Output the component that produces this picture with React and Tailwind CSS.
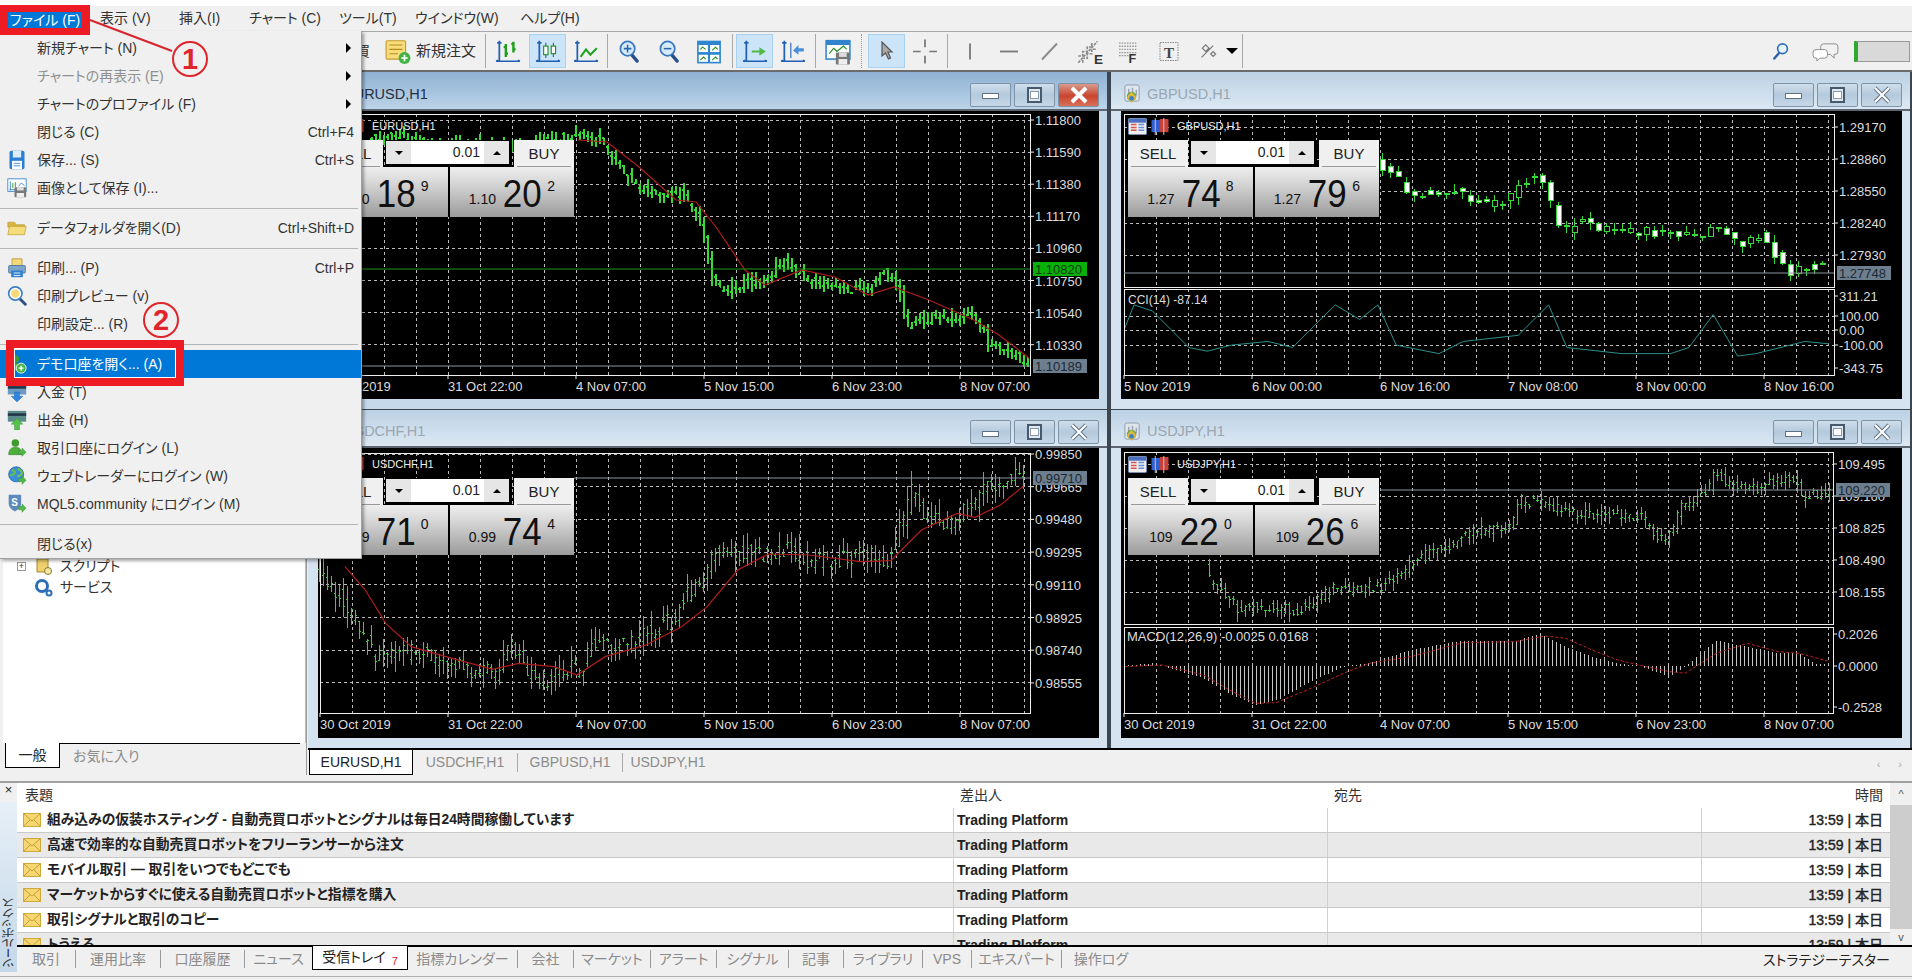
import React from 'react'

const font = "[font-family:'Liberation_Sans','Noto_Sans_CJK_JP',sans-serif] [font-feature-settings:'palt']"
const GREEN = '#36d936'

// ---------- chart helpers ----------
const scale = pts => pts.map(([x, y]) => [x * 1.2194, y * 1.2194])
const zoomed = (pts, ox, oy, fx) => pts.map(([x, y]) => [ox + x / fx, oy + y / 3])
const line = pts => pts.map(p => p.join(',')).join(' ')

function lerp(pts, x) {
  if (x <= pts[0][0]) return pts[0][1]
  for (let i = 1; i < pts.length; i++) {
    if (x <= pts[i][0]) {
      const [a, b] = [pts[i - 1], pts[i]]
      return a[1] + ((b[1] - a[1]) * (x - a[0])) / (b[0] - a[0] || 1)
    }
  }
  return pts[pts.length - 1][1]
}

function makeBars(pts, step, seed, amp) {
  let s = seed
  const r = () => (s = (s * 9301 + 49297) % 233280) / 233280
  const out = []
  for (let x = Math.round(pts[0][0]) + 0.5; x <= pts[pts.length - 1][0]; x += step) {
    const o = lerp(pts, x - step / 2) + (r() - 0.5) * amp
    const c = lerp(pts, x + step / 2) + (r() - 0.5) * amp
    out.push({ x, o, c, hi: Math.min(o, c) - r() * amp * 0.9, lo: Math.max(o, c) + r() * amp * 0.9 })
  }
  return out
}

const barPath = bars => bars.map(b => `M${b.x} ${b.hi.toFixed(1)}V${b.lo.toFixed(1)}M${b.x - 1.5} ${b.o.toFixed(1)}H${b.x}M${b.x} ${b.c.toFixed(1)}H${b.x + 1.5}`).join('')

function Candles({ bars, w = 3 }) {
  return (
    <g shapeRendering="crispEdges">
      {bars.map(b => (
        <g key={b.x} stroke={GREEN}>
          <line x1={b.x} x2={b.x} y1={b.hi} y2={b.lo} />
          <rect x={b.x - w / 2} width={w} y={Math.min(b.o, b.c)} height={Math.max(1, Math.abs(b.o - b.c))} fill={b.o < b.c ? '#fff' : '#000'} />
        </g>
      ))}
    </g>
  )
}

function Chart({ x, y, w, h, left, right, panes, levels, times, timeY, tags = [], children }) {
  const bottom = panes[panes.length - 1][1]
  const vx = []
  for (let v = left + 32; v < right; v += 32) vx.push(v)
  return (
    <svg className="block" width={w} height={h} viewBox={`${x} ${y} ${w} ${h}`} fontFamily="Liberation Sans, sans-serif" fontSize="13">
      <g shapeRendering="crispEdges">
        {panes.map(([a, b]) => (
          <g key={a}>
            {vx.map(v => <line key={v} x1={v} x2={v} y1={a} y2={b} stroke="#bbb" strokeDasharray="3 3" />)}
          </g>
        ))}
        {levels.filter(l => l.grid !== false).map(l => (
          <line key={l.t} x1={left} x2={right} y1={l.y} y2={l.y} stroke="#bbb" strokeDasharray="3 3" />
        ))}
      </g>
      {children}
      {panes.map(([a, b]) => <rect key={a} x={left} y={a} width={right - left} height={b - a} fill="none" stroke="#eee" shapeRendering="crispEdges" />)}
      {levels.map(l => (
        <g key={l.t}>
          <line x1={right} x2={right + 4} y1={l.y} y2={l.y} stroke="#eee" />
          <text x={right + 5} y={l.y + 5} fill="#ddd">{l.t}</text>
        </g>
      ))}
      {tags.map(t => (
        <g key={t.t}>
          <line x1={t.from ?? left} x2={right} y1={t.y} y2={t.y} stroke={t.line} />
          <rect x={right + 3} y={t.y - 7} width="54" height="14" fill={t.bg} />
          <text x={right + 5} y={t.y + 5} fill={t.fg}>{t.t}</text>
        </g>
      ))}
      {times.map((t, i) => (
        <g key={t}>
          <line x1={left + i * 128} x2={left + i * 128} y1={bottom} y2={bottom + 4} stroke="#eee" />
          <text x={left + i * 128} y={timeY} fill="#ddd">{t}</text>
        </g>
      ))}
    </svg>
  )
}

// ---------- chart data ----------
const times = ['30 Oct 2019', '31 Oct 22:00', '4 Nov 07:00', '5 Nov 15:00', '6 Nov 23:00', '8 Nov 07:00']

const eurPts = [[372, 138], [400, 136], [440, 146], [520, 146], [560, 138], [585, 136], [600, 140], [622, 165], [640, 187], [660, 197], [681, 193], [693, 203], [705, 233], [713, 273], [722, 290], [762, 280], [787, 263], [811, 280], [844, 290], [873, 287], [885, 270], [897, 283], [905, 300], [908, 329], [920, 320], [975, 315], [994, 347], [1029, 362]]
const eurMa = [[579, 140], [608, 142], [640, 167], [677, 200], [697, 202], [717, 227], [746, 270], [766, 285], [803, 270], [836, 277], [869, 295], [895, 287], [930, 300], [975, 320], [1000, 335], [1030, 358]]

const gbpPts = [[1382, 163], [1396, 173], [1405, 182], [1413, 193], [1435, 191], [1460, 193], [1476, 199], [1492, 203], [1509, 200], [1517, 195], [1524, 182], [1540, 178], [1549, 187], [1556, 208], [1565, 232], [1572, 227], [1588, 222], [1596, 227], [1619, 230], [1668, 233], [1684, 233], [1700, 238], [1717, 228], [1733, 238], [1747, 245], [1764, 236], [1772, 242], [1780, 257], [1788, 268], [1796, 273], [1805, 267], [1825, 268]]
const cci = scale([[922, 270], [930, 250], [945, 255], [960, 270], [975, 285], [990, 288], [1010, 283], [1040, 280], [1060, 285], [1075, 270], [1095, 250], [1115, 262], [1130, 250], [1145, 283], [1180, 290], [1200, 280], [1245, 275], [1270, 250], [1285, 285], [1330, 290], [1370, 290], [1385, 285], [1405, 258], [1425, 292], [1440, 290], [1480, 280], [1500, 282]])

const chfPts = zoomed([[40, 470], [60, 510], [100, 600], [140, 700], [160, 745], [200, 720], [260, 740], [320, 770], [390, 790], [420, 700], [450, 780], [490, 820], [530, 770], [560, 780], [580, 690], [620, 710], [650, 700], [700, 660], [740, 620], [760, 560], [800, 490], [820, 420], [880, 430], [920, 430], [960, 420], [1000, 450], [1060, 450], [1120, 430], [1155, 460], [1190, 320], [1205, 240], [1230, 330], [1280, 340], [1320, 290], [1350, 240], [1400, 190], [1425, 190]], 300, 410, 1.96)
const chfMa = zoomed([[90, 470], [130, 540], [170, 640], [220, 710], [300, 745], [380, 778], [430, 760], [500, 770], [545, 795], [600, 740], [680, 705], [750, 650], [800, 590], [860, 480], [920, 432], [1000, 435], [1100, 455], [1160, 452], [1220, 360], [1290, 310], [1325, 322], [1375, 285], [1420, 228]], 300, 410, 1.96)

const jpyPts = zoomed([[210, 500], [215, 540], [240, 580], [270, 625], [330, 620], [380, 630], [415, 620], [430, 590], [460, 560], [480, 570], [550, 555], [600, 500], [650, 445], [680, 440], [720, 395], [800, 375], [815, 300], [880, 320], [920, 340], [1000, 345], [1050, 350], [1090, 425], [1110, 400], [1120, 330], [1180, 270], [1190, 210], [1215, 250], [1260, 270], [1340, 225], [1360, 295], [1410, 275]], 1100, 400, 1.931)
const macdHist = zoomed([[48, 797], [100, 790], [120, 797], [200, 835], [250, 880], [300, 915], [350, 895], [400, 850], [470, 800], [520, 790], [600, 750], [700, 722], [800, 725], [850, 700], [900, 740], [950, 770], [1000, 790], [1040, 797], [1100, 830], [1130, 800], [1190, 722], [1250, 740], [1310, 760], [1350, 760], [1380, 790], [1410, 795]], 1100, 400, 1.931)
const macdSig = zoomed([[48, 800], [120, 795], [200, 825], [250, 870], [300, 910], [340, 908], [400, 870], [470, 820], [520, 790], [600, 770], [700, 728], [800, 725], [860, 708], [900, 715], [950, 750], [1000, 780], [1040, 795], [1100, 815], [1130, 820], [1190, 760], [1250, 730], [1310, 755], [1350, 760], [1410, 785]], 1100, 400, 1.931)

const histBars = []
for (let x = 1128.5; x < 1830; x += 4) histBars.push(x)

const lv = (start, step, arr) => arr.map((t, i) => ({ t, y: start + i * step }))

// ---------- toolbar & menu icons ----------
const Svg = ({ className = 'w-[20px] h-[20px]', children, box = '0 0 24 24' }) => (
  <svg viewBox={box} className={`${className} shrink-0`} fill="none">{children}</svg>
)

const axes = <path d="M4 2v19M1 21h22M2 4h4M1 21l2-1M23 21l-2-1" stroke="#1f5fb4" strokeWidth="1.6" />

const tb = {
  order: (
    <Svg className="w-[26px] h-[27px]">
      <rect x="1" y="2" width="18" height="17" rx="1" fill="#f6dc7a" stroke="#c59a28" />
      <path d="M4 6h12M4 10h12M4 14h8" stroke="#b98a1c" />
      <circle cx="18" cy="18" r="5.5" fill="#45b245" />
      <path d="M18 15v6M15 18h6" stroke="#fff" strokeWidth="1.6" />
    </Svg>
  ),
  bars: <Svg className="w-[26px] h-[27px]">{axes}<path d="M10 5v12M8 8h2M10 14h2M17 3v10M15 5h2M17 10h2" stroke="#1ba01b" strokeWidth="2.2" /></Svg>,
  candles: <Svg className="w-[26px] h-[27px]">{axes}<path d="M10 4v14M17 4v13" stroke="#1f5fb4" /><rect x="8" y="7" width="4" height="8" fill="#fff" stroke="#1a8a1a" /><rect x="15" y="7" width="4" height="7" fill="#fff" stroke="#1a8a1a" /></Svg>,
  line: <Svg className="w-[26px] h-[27px]">{axes}<path d="M7 17l5-7 4 5 6-6" stroke="#1ba01b" strokeWidth="1.8" /></Svg>,
  zoomIn: <Svg className="w-[23px] h-[27px]"><path d="M14 15l6 7" stroke="#274f8a" strokeWidth="3.5" strokeLinecap="round" /><circle cx="10" cy="9" r="7.5" fill="#d6ebfa" stroke="#3a78c0" strokeWidth="1.8" /><path d="M10 5v8M6 9h8" stroke="#2a64aa" strokeWidth="1.6" /></Svg>,
  zoomOut: <Svg className="w-[23px] h-[27px]"><path d="M14 15l6 7" stroke="#274f8a" strokeWidth="3.5" strokeLinecap="round" /><circle cx="10" cy="9" r="7.5" fill="#d6ebfa" stroke="#3a78c0" strokeWidth="1.8" /><path d="M6 9h8" stroke="#2a64aa" strokeWidth="1.6" /></Svg>,
  tile: (
    <Svg className="w-[26px] h-[27px]">
      <rect x="1" y="2" width="22" height="21" fill="#2f86d0" />
      <rect x="2.5" y="6" width="8.5" height="6.5" fill="#fff" /><rect x="13" y="6" width="8.5" height="6.5" fill="#fff" />
      <rect x="2.5" y="15" width="8.5" height="6.5" fill="#fff" /><rect x="13" y="15" width="8.5" height="6.5" fill="#fff" />
      <path d="M4 10l2-2 3 2M15 11l3-3 2 2M4 20l3-3 2 2M15 20l3-3 2 2" stroke="#1a8a1a" />
    </Svg>
  ),
  auto: <Svg className="w-[26px] h-[27px]">{axes}<path d="M9 11h7V8l6 4-6 4v-3H9z" fill="#52b848" /></Svg>,
  shift: <Svg className="w-[26px] h-[27px]">{axes}<path d="M10 4v14" stroke="#1f5fb4" /><path d="M22 9h-5V6l-5 5 5 4v-3h5z" fill="#4a90d9" /></Svg>,
  save: (
    <Svg className="w-[26px] h-[27px]">
      <rect x="1" y="2" width="22" height="17" fill="#fff" stroke="#3083cc" strokeWidth="1.4" />
      <rect x="1" y="2" width="22" height="4" fill="#3083cc" />
      <path d="M4 14l4-5 3 3 6-5 3 3" stroke="#1a8a1a" />
      <rect x="10" y="13" width="13" height="11" rx="1" fill="#777" />
      <rect x="13" y="13" width="7" height="4" fill="#ddd" /><rect x="12.5" y="19" width="8" height="5" fill="#eee" />
    </Svg>
  ),
  cursor: <Svg className="w-[14px] h-[20px]" box="0 0 14 20"><path d="M2 1v14l3.5-3 3 6 2-1-2.5-6H12z" fill="#a9a9a9" stroke="#555" strokeWidth="1.2" /></Svg>,
  cross: <Svg className="w-[26px] h-[27px]"><path d="M12 1v7M12 16v7M1 12h7M16 12h7" stroke="#777" strokeWidth="1.6" /></Svg>,
  vline: <Svg className="w-[18px] h-[27px]" box="0 0 18 24"><path d="M9 4v16" stroke="#777" strokeWidth="1.8" /></Svg>,
  hline: <Svg className="w-[18px] h-[27px]" box="0 0 18 24"><path d="M0 12h18" stroke="#777" strokeWidth="1.8" /></Svg>,
  trend: <Svg className="w-[17px] h-[27px]" box="0 0 17 24"><path d="M1 20L16 4" stroke="#8a8a8a" strokeWidth="2" /></Svg>,
  fibE: (
    <Svg className="w-[27px] h-[27px]">
      <path d="M2 22L19 3M2 16h4v-4h4V8h4V4M6 22v-4h4v-4h4v-4h4" stroke="#8a8a8a" strokeWidth="1.5" strokeDasharray="2.5 1" />
      <text x="16" y="23" fontSize="12" fontWeight="700" fontFamily="Liberation Sans" fill="#333">E</text>
    </Svg>
  ),
  fibF: (
    <Svg className="w-[21px] h-[27px]" box="0 0 20 24">
      <path d="M1 4h17M1 7h17M1 10h17M1 13h17M1 16h10" stroke="#999" strokeWidth="1.2" strokeDasharray="1.5 1" />
      <text x="10" y="23" fontSize="12" fontWeight="700" fontFamily="Liberation Sans" fill="#333">F</text>
    </Svg>
  ),
  text: (
    <Svg className="w-[20px] h-[27px]" box="0 0 20 24">
      <rect x="1" y="3" width="18" height="18" stroke="#888" strokeDasharray="1.5 1" />
      <text x="5" y="18" fontSize="15" fontWeight="700" fontFamily="Liberation Serif" fill="#444">T</text>
    </Svg>
  ),
  shape: <Svg className="w-[20px] h-[27px]"><path d="M4 8l4-4 4 4-4 4zM14 15l3-3 3 3-3 3zM3 19L17 5" stroke="#777" strokeWidth="1.4" /></Svg>,
  search: <Svg className="w-[18px] h-[20px]"><path d="M10 14l-7 8" stroke="#2a5fa8" strokeWidth="3.2" strokeLinecap="round" /><circle cx="14" cy="9" r="6.5" fill="#e6f2fc" stroke="#2f6fba" strokeWidth="2.2" /></Svg>,
  chat: (
    <Svg className="w-[27px] h-[21px]" box="0 0 28 22">
      <path d="M12 3h12a3 3 0 013 3v5a3 3 0 01-3 3h-1v4l-4-4h-7a3 3 0 01-3-3V6a3 3 0 013-3z" fill="#f2f2f2" stroke="#8a8a8a" />
      <path d="M4 9h9a3 3 0 013 3v3a3 3 0 01-3 3H8l-3 3v-3H4a3 3 0 01-3-3v-3a3 3 0 013-3z" fill="#fff" stroke="#8a8a8a" />
    </Svg>
  ),
}

const greenArrow = <path d="M14 15h4v-3l5 5-5 5v-3h-4z" fill="#52b848" stroke="#2f8a2f" strokeWidth=".5" />
const person = <><circle cx="10" cy="6" r="4.5" fill="#3f9b2f" /><path d="M2 20c0-6 3-9 8-9s8 3 8 9z" fill="#4caf3a" stroke="#2f7a25" strokeWidth=".6" /></>

const mi = {
  save: <Svg><rect x="3" y="1" width="18" height="22" rx="2" fill="#2a7fd4" /><rect x="7" y="1" width="10" height="8" fill="#dcecf9" /><rect x="6" y="13" width="12" height="10" fill="#fff" /><path d="M8 16h8M8 19h8" stroke="#2a7fd4" /></Svg>,
  saveImg: <Svg><rect x="1" y="1" width="22" height="15" fill="#fff" stroke="#2f7fc8" /><path d="M4 4v11M3 14h8M14 10l3-4 4 3" stroke="#2f7fc8" /><path d="M7 6v6M10 5v6" stroke="#1a8a1a" /><rect x="9" y="11" width="14" height="12" rx="1" fill="#777" /><rect x="12" y="11" width="8" height="4" fill="#ddd" /><rect x="11.5" y="18" width="9" height="5" fill="#eee" /></Svg>,
  folder: <Svg><path d="M1 5h8l2 3h10v3H1z" fill="#d9b441" stroke="#b08c24" strokeWidth=".6" /><path d="M1 20L3 10h20l-2 10z" fill="#f5dc7a" stroke="#c09a2c" strokeWidth=".8" /></Svg>,
  print: <Svg><path d="M6 1h12v8H6z" fill="#f4d97b" stroke="#b9982f" /><rect x="2" y="9" width="20" height="9" rx="1" fill="#7ea6c9" stroke="#4a7299" /><rect x="5" y="15" width="14" height="8" fill="#2e7fcf" /><path d="M8 18h8M8 21h8" stroke="#fff" /></Svg>,
  preview: <Svg><path d="M15 15l7 7" stroke="#2c4f86" strokeWidth="3.4" strokeLinecap="round" /><circle cx="10" cy="9" r="8" fill="#fff" stroke="#3f7fc4" strokeWidth="2" /><circle cx="10" cy="9" r="5" fill="#f4d97b" /></Svg>,
  demo: <Svg>{person}<circle cx="17" cy="17" r="6" fill="#4bb74b" stroke="#fff" /><path d="M17 14v6M14 17h6" stroke="#fff" strokeWidth="1.6" /></Svg>,
  deposit: <Svg><rect x="1" y="2" width="22" height="13" fill="#6c9ac4" /><rect x="1" y="5" width="22" height="3" fill="#234" /><path d="M9 12h6v5h4l-7 7-7-7h4z" fill="#2e86de" stroke="#1a5fa8" strokeWidth=".5" /></Svg>,
  withdraw: <Svg><rect x="1" y="1" width="22" height="13" fill="#5b8a8a" /><rect x="1" y="4" width="22" height="3" fill="#234" /><path d="M9 24v-7H5l7-7 7 7h-4v7z" fill="#55c24b" stroke="#2f8a2f" strokeWidth=".5" /></Svg>,
  login: <Svg>{person}{greenArrow}</Svg>,
  web: <Svg><circle cx="11" cy="10" r="9" fill="#3b8fd8" stroke="#1f6ab0" /><path d="M6 5c3 0 4 2 3 4s-4 1-5 3M13 3c2 2 6 3 5 6s-4 1-5 4" stroke="#6cc24a" strokeWidth="2.4" />{greenArrow}</Svg>,
  mql: <Svg><path d="M2 1h15v10c0 5-4 8-7.500 10C6 19 2 16 2 11z" fill="#5c88bd" /><text x="5" y="14" fontSize="12" fontWeight="700" fontFamily="Liberation Sans" fill="#fff">S</text>{greenArrow}</Svg>,
}

const AppIcon = () => (
  <svg viewBox="0 0 20 22" className="w-[19px] h-[21px] shrink-0">
    <rect x="2" y="1" width="15" height="17" rx="2" fill="#dfe6ee" stroke="#8f9aa8" />
    <path d="M6 5v9M10 4v10M14 6v6" stroke="#9aa5b3" strokeWidth="1.5" />
    <circle cx="9" cy="13" r="5" fill="#6aa84f" />
    <path d="M9 8l5 6-5 6-5-6z" fill="#e0b93a" />
    <circle cx="9" cy="15" r="2.500" fill="#3d7fc4" />
  </svg>
)

// ---------- windows ----------
function TitleBtn({ kind, active }) {
  const red = kind === 'x' && active
  return (
    <div className={`w-[41px] h-[24px] rounded-[2px] border border-[#7d93a8] flex items-center justify-center ${red ? 'bg-[linear-gradient(#d99a8c,#c9452f_55%,#d9705a)]' : 'bg-[linear-gradient(#cfdeec,#b4c9dc_50%,#c6d8e8)]'}`}>
      {kind === 'min' && <div className="w-[17px] h-[6px] mt-[3px] bg-white border border-[#5f7184]" />}
      {kind === 'max' && <div className="w-[15px] h-[16px] border-2 border-[#46596d] bg-[#dfe8f0] flex items-center justify-center"><div className="w-[9px] h-[8px] bg-white border border-[#8a99a8]" /></div>}
      {kind === 'x' && (
        <svg viewBox="0 0 18 18" className="w-[18px] h-[18px]"><path d="M2 2l14 14M16 2L2 16" stroke={red ? '#fff' : '#5f7184'} strokeWidth="4" /><path d="M2 2l14 14M16 2L2 16" stroke="#fff" strokeWidth="2.2" /></svg>
      )}
    </div>
  )
}

function ChartWindow({ title, active, bodyH, titleH, children, edge }) {
  return (
    <div className={`pl-[10px] pr-[8px] flex flex-col ${active ? 'bg-[#c4d8ea]' : 'bg-[#d5e3f0]'} ${edge}`}>
      <div className={`-ml-[10px] -mr-[8px] pl-[12px] pr-[8px] pt-[8px] flex items-center shrink-0 border-b-2 border-[#5d6670] ${titleH} ${active ? 'bg-[linear-gradient(#8fb2d4,#bcd3e8)]' : 'bg-[linear-gradient(#bcd1e4,#dce8f3)]'}`}>
        <AppIcon />
        <span className={`ml-[5px] text-[14.5px] ${active ? 'text-[#24313d]' : 'text-[#9aa6b1]'}`}>{title}</span>
        <div className="ml-auto flex gap-[3px]">
          <TitleBtn kind="min" active={active} />
          <TitleBtn kind="max" active={active} />
          <TitleBtn kind="x" active={active} />
        </div>
      </div>
      <div className="relative bg-black" style={{ height: bodyH }}>{children}</div>
    </div>
  )
}

function Price({ pre, big, sup, className }) {
  return (
    <div className={`h-[50px] bg-[linear-gradient(#eeeeee,#d8d8d8_30%,#9b9b9b)] flex items-end justify-center text-[#111] ${className}`}>
      <span className="text-[14px] leading-none mb-[11px] mr-[5px]">{pre}</span>
      <span className="text-[38px] leading-none mb-[4px] scale-x-[.92]">{big}</span>
      <span className="text-[14px] leading-none mb-[24px] ml-[4px]">{sup}</span>
    </div>
  )
}

function TradePanel({ pos, name, sell, buy }) {
  return (
    <div className={`absolute w-[251px] ${pos}`}>
      <div className="absolute -top-[22px] left-0 h-[17px] flex items-center">
        <svg viewBox="0 0 20 18" className="w-[19px] h-[17px]"><rect x=".5" y=".5" width="19" height="17" rx="1" fill="#eee" stroke="#7a8fb8" /><rect x="1" y="1" width="18" height="4" fill="#4c6fc0" /><path d="M3 7h6M3 10h6M3 13h6" stroke="#d9534f" strokeWidth="1.6" /><path d="M11 7h6M11 10h6M11 13h6" stroke="#6a8fd8" strokeWidth="1.6" /></svg>
        <svg viewBox="0 0 20 18" className="w-[20px] h-[17px] ml-[3px]"><rect x="1" y="2" width="9" height="13" fill="#2f5fd0" /><rect x="10" y="1" width="9" height="14" fill="#c8403a" /><path d="M5 0v18M14 0v18" stroke="#ccc" /></svg>
        <span className="ml-[7px] text-[11px] text-[#eee] whitespace-nowrap">{name}</span>
      </div>
      <div className="flex h-[27px] items-stretch text-[#222] text-[15px]">
        <div className="w-[60px] bg-[#f0f0f0] flex items-center justify-center"><span className="border-b border-[#999] w-[54px] h-[26px] text-center leading-[26px]">SELL</span></div>
        <div className="mx-[2px] w-[127px] bg-black p-[1px] pb-[3px] pr-[3px] flex">
          <div className="w-[25px] bg-[#e6e6e6] flex items-center justify-center"><div className="border-x-[4px] border-x-transparent border-t-[4px] border-t-black" /></div>
          <div className="flex-1 bg-white text-right pr-[4px] text-[14px] leading-[23px]">0.01</div>
          <div className="w-[25px] bg-[#e6e6e6] flex items-center justify-center"><div className="border-x-[4px] border-x-transparent border-b-[4px] border-b-black" /></div>
        </div>
        <div className="w-[60px] bg-[#f0f0f0] flex items-center justify-center"><span className="border-b border-[#999] w-[54px] h-[26px] text-center leading-[26px]">BUY</span></div>
      </div>
      <div className="flex bg-black gap-[2px]">
        <Price {...sell} className="w-[125px]" />
        <Price {...buy} className="w-[124px]" />
      </div>
    </div>
  )
}

function EurWindow() {
  return (
    <ChartWindow title="EURUSD,H1" active bodyH={288} titleH="h-[39px]" edge="border-r-2 border-[#3c4650]">
      <Chart x={319} y={111} w={782} h={288} left={321} right={1031} timeY={391}
        panes={[[114, 375]]}
        levels={lv(120, 32.1, ['1.11800', '1.11590', '1.11380', '1.11170', '1.10960', '1.10750', '1.10540', '1.10330'])}
        times={times}
        tags={[{ t: '1.10820', y: 269, line: '#1f9a1f', bg: '#09b009', fg: '#0c3d0c' }, { t: '1.10189', y: 366, line: '#8a97a3', bg: '#6d7f8f', fg: '#1c2833' }]}>
        <path d={barPath(makeBars(eurPts, 4, 11, 9))} stroke={GREEN} strokeWidth="2" shapeRendering="crispEdges" />
        <polyline points={line(eurMa)} fill="none" stroke="#b01c1c" strokeWidth="1.2" />
      </Chart>
      <TradePanel pos="left-[5px] top-[29px]" name="EURUSD,H1" sell={{ pre: '1.10', big: '18', sup: '9' }} buy={{ pre: '1.10', big: '20', sup: '2' }} />
    </ChartWindow>
  )
}

function GbpWindow() {
  return (
    <ChartWindow title="GBPUSD,H1" bodyH={288} titleH="h-[39px]" edge="ml-[2px]">
      <Chart x={1121} y={111} w={783} h={288} left={1124} right={1834} timeY={391}
        panes={[[114, 287], [289, 375]]}
        levels={[...lv(127, 32, ['1.29170', '1.28860', '1.28550', '1.28240', '1.27930']),
          { t: '311.21', y: 296, grid: false }, { t: '100.00', y: 316 }, { t: '0.00', y: 330 }, { t: '-100.00', y: 345 }, { t: '-343.75', y: 368, grid: false }]}
        times={['5 Nov 2019', '6 Nov 00:00', '6 Nov 16:00', '7 Nov 08:00', '8 Nov 00:00', '8 Nov 16:00']}
        tags={[{ t: '1.27748', y: 273, line: '#8a97a3', bg: '#6d7f8f', fg: '#1c2833' }]}>
        <Candles bars={makeBars(gbpPts, 8, 23, 9)} w={5} />
        <polyline points={line(cci)} fill="none" stroke="#2b8f8f" />
        <text x="1128" y="304" fill="#ddd" fontSize="12">CCI(14) -87.14</text>
      </Chart>
      <TradePanel pos="left-[7px] top-[29px]" name="GBPUSD,H1" sell={{ pre: '1.27', big: '74', sup: '8' }} buy={{ pre: '1.27', big: '79', sup: '6' }} />
    </ChartWindow>
  )
}

function ChfWindow() {
  return (
    <ChartWindow title="USDCHF,H1" bodyH={290} titleH="h-[38px]" edge="border-r-2 border-[#3c4650]">
      <Chart x={319} y={448} w={782} h={290} left={321} right={1031} timeY={729}
        panes={[[453, 713]]}
        levels={lv(454, 32.7, ['0.99850', '0.99665', '0.99480', '0.99295', '0.99110', '0.98925', '0.98740', '0.98555'])}
        times={times}
        tags={[{ t: '0.99710', y: 478, from: 575, line: '#8a97a3', bg: '#6d7f8f', fg: '#1c2833' }]}>
        <path d={barPath(makeBars(chfPts, 4, 37, 17))} stroke="#3ecf3e" shapeRendering="crispEdges" />
        <polyline points={line(chfMa)} fill="none" stroke="#b01c1c" strokeWidth="1.2" />
      </Chart>
      <TradePanel pos="left-[5px] top-[30px]" name="USDCHF,H1" sell={{ pre: '0.99', big: '71', sup: '0' }} buy={{ pre: '0.99', big: '74', sup: '4' }} />
    </ChartWindow>
  )
}

function JpyWindow() {
  return (
    <ChartWindow title="USDJPY,H1" bodyH={290} titleH="h-[38px]" edge="ml-[2px]">
      <Chart x={1121} y={448} w={783} h={290} left={1124} right={1833} timeY={729}
        panes={[[452, 624], [627, 713]]}
        levels={[...lv(464, 32, ['109.495', '109.160', '108.825', '108.490', '108.155']),
          { t: '0.2026', y: 634, grid: false }, { t: '0.0000', y: 666, grid: false }, { t: '-0.2528', y: 707, grid: false }]}
        times={times}
        tags={[{ t: '109.220', y: 490, from: 1380, line: '#8a97a3', bg: '#6d7f8f', fg: '#1c2833' }]}>
        <path d={barPath(makeBars(jpyPts, 4, 53, 10))} stroke="#3ecf3e" shapeRendering="crispEdges" />
        {histBars.map(x => <line key={x} x1={x} x2={x} y1="666" y2={lerp(macdHist, x)} stroke="#c4c4c4" shapeRendering="crispEdges" />)}
        <polyline points={line(macdSig)} fill="none" stroke="#c02020" strokeDasharray="3 2" />
        <text x="1127" y="641" fill="#ddd" fontSize="13">MACD(12,26,9) -0.0025 0.0168</text>
      </Chart>
      <TradePanel pos="left-[7px] top-[30px]" name="USDJPY,H1" sell={{ pre: '109', big: '22', sup: '0' }} buy={{ pre: '109', big: '26', sup: '6' }} />
    </ChartWindow>
  )
}

// ---------- bars ----------
const menus = [
  { t: '表示 (V)', w: 'w-[79px]' }, { t: '挿入(I)', w: 'w-[70px]' }, { t: 'チャート (C)', w: 'w-[90px]' },
  { t: 'ツール(T)', w: 'w-[76px]' }, { t: 'ウインドウ(W)', w: 'w-[105px]' }, { t: 'ヘルプ(H)', w: 'w-[60px]' },
]

function MenuBar() {
  return (
    <div className="h-[26px] shrink-0 pl-[100px] flex items-center border-b border-[#a9a9a9] text-[14px] text-[#333]">
      {menus.map(m => <span key={m.t} className={`${m.w} whitespace-nowrap`}>{m.t}</span>)}
    </div>
  )
}

const Sep = ({ ml }) => <div className={`w-px h-[34px] bg-[#a8a8a8] shrink-0 ${ml}`} />
const Hot = ({ ml, children }) => <div className={`w-[37px] h-[34px] shrink-0 bg-[#cce4f7] border border-[#a8d2f2] flex items-center justify-center ${ml}`}>{children}</div>

function Toolbar() {
  return (
    <div className="h-[40px] shrink-0 flex items-center border-b-2 border-[#6c6c6c] text-[14px] text-[#333]">
      <span className="ml-[310px] w-[60px] text-right whitespace-nowrap">自動売買</span>
      <div className="ml-[15px]">{tb.order}</div>
      <span className="ml-[5px] w-[60px] whitespace-nowrap text-[15px]">新規注文</span>
      <Sep ml="ml-[9px]" />
      <div className="ml-[9px]">{tb.bars}</div>
      <Hot ml="ml-[8px]">{tb.candles}</Hot>
      <div className="ml-[7px]">{tb.line}</div>
      <Sep ml="ml-[8px]" />
      <div className="ml-[10px]">{tb.zoomIn}</div>
      <div className="ml-[17px]">{tb.zoomOut}</div>
      <div className="ml-[15px]">{tb.tile}</div>
      <Sep ml="ml-[10px]" />
      <Hot ml="ml-[3px]">{tb.auto}</Hot>
      <div className="ml-[7px]">{tb.shift}</div>
      <Sep ml="ml-[9px]" />
      <div className="ml-[9px]">{tb.save}</div>
      <div className="ml-[10px] w-px h-[34px] border-l border-dotted border-[#999]" />
      <Hot ml="ml-[6px]">{tb.cursor}</Hot>
      <div className="ml-[7px]">{tb.cross}</div>
      <Sep ml="ml-[9px]" />
      <div className="ml-[13px]">{tb.vline}</div>
      <div className="ml-[21px]">{tb.hline}</div>
      <div className="ml-[23px]">{tb.trend}</div>
      <div className="ml-[18px]">{tb.fibE}</div>
      <div className="ml-[15px]">{tb.fibF}</div>
      <div className="ml-[20px]">{tb.text}</div>
      <div className="ml-[20px]">{tb.shape}</div>
      <div className="ml-[7px] border-x-[6px] border-x-transparent border-t-[6px] border-t-black" />
      <Sep ml="ml-[4px]" />
      <div className="ml-auto">{tb.search}</div>
      <div className="ml-[22px]">{tb.chat}</div>
      <div className="ml-[15px] mr-[2px] w-[56px] h-[21px] bg-[#d9d9d9] border border-[#999] border-l-[4px] border-l-[#2fa82f]" />
    </div>
  )
}

function Navigator() {
  return (
    <div className="w-[307px] shrink-0 flex flex-col pl-[3px] border-r border-[#9a9a9a]">
      <div className="flex-1 bg-white border-r border-[#bbb] pt-[484px] pl-[14px] text-[14px] text-[#333]">
        <div className="h-[21px] flex items-center">
          <div className="w-[9px] h-[9px] border border-[#999] mr-[9px] flex items-center justify-center text-[9px] leading-none">+</div>
          <svg viewBox="0 0 18 18" className="w-[18px] h-[18px]"><path d="M2 1h11v13H2z" fill="#eed06c" stroke="#a8872a" /><circle cx="13" cy="13" r="3.5" fill="#f5e7a8" stroke="#8a7a30" /></svg>
          <span className="ml-[7px]">スクリプト</span>
        </div>
        <div className="h-[21px] flex items-center pl-[18px]">
          <svg viewBox="0 0 18 18" className="w-[18px] h-[18px]"><circle cx="7" cy="7" r="5.500" fill="#fff" stroke="#2c6fb8" strokeWidth="3" /><circle cx="14" cy="14" r="2.500" fill="#fff" stroke="#2c6fb8" strokeWidth="2" /></svg>
          <span className="ml-[7px]">サービス</span>
        </div>
      </div>
      <div className="h-[32px] flex shrink-0 text-[14px] pr-[6px]">
        <div className="w-[55px] h-[25px] ml-[2px] bg-white border-x border-b border-black flex items-center justify-center text-[#222]">一般</div>
        <div className="flex-1 h-[25px] border-t border-black pl-[13px] leading-[24px] text-[#8c8c8c]">お気に入り</div>
      </div>
    </div>
  )
}

const mdiTabs = [
  { t: 'USDCHF,H1', w: 'w-[105px]' }, { t: 'GBPUSD,H1', w: 'w-[105px]' }, { t: 'USDJPY,H1', w: 'w-[90px] border-r-0' },
]

function TabStrip() {
  return (
    <div className="h-[25px] shrink-0 flex text-[14px] pl-[1px] items-start">
      <div className="w-[104px] h-[25px] bg-white border-x border-b border-black flex items-center justify-center text-[#222]">EURUSD,H1</div>
      {mdiTabs.map(m => (
        <div key={m.t} className={`${m.w} h-[19px] mt-[3px] border-r border-[#aaa] flex items-center justify-center text-[#8c8c8c]`}>{m.t}</div>
      ))}
      <div className="ml-auto flex gap-[18px] pr-[10px] mt-[6px] text-[#aaa] text-[11px]"><span>‹</span><span>›</span></div>
    </div>
  )
}

const rows = [
  '組み込みの仮装ホスティング - 自動売買ロボットとシグナルは毎日24時間稼働しています',
  '高速で効率的な自動売買ロボットをフリーランサーから注文',
  'モバイル取引 — 取引をいつでもどこでも',
  'マーケットからすぐに使える自動売買ロボットと指標を購入',
  '取引シグナルと取引のコピー',
  'トうえる',
]

const bottomTabs = [
  { t: '取引', w: 'w-[59px]' }, { t: '運用比率', w: 'w-[85px]' }, { t: '口座履歴', w: 'w-[84px]' },
  { t: 'ニュース', w: 'w-[67px] border-r-0' }, { t: '受信トレイ', w: 'w-[96px]', on: true }, { t: '指標カレンダー', w: 'w-[110px]' },
  { t: '会社', w: 'w-[56px]' }, { t: 'マーケット', w: 'w-[77px]' }, { t: 'アラート', w: 'w-[66px]' },
  { t: 'シグナル', w: 'w-[72px]' }, { t: '記事', w: 'w-[55px]' }, { t: 'ライブラリ', w: 'w-[79px]' },
  { t: 'VPS', w: 'w-[49px]' }, { t: 'エキスパート', w: 'w-[90px]' }, { t: '操作ログ', w: 'w-[78px] border-r-0' },
]

const Mail = () => (
  <svg viewBox="0 0 18 14" className="w-[18px] h-[14px] shrink-0">
    <rect x=".5" y=".5" width="17" height="13" fill="#f6d772" stroke="#d0a93c" />
    <path d="M1 1l8 7 8-7M1 13l6-6M17 13l-6-6" stroke="#c99d2f" fill="none" />
  </svg>
)

function Toolbox() {
  return (
    <div className="h-[191px] shrink-0 flex border-t-2 border-[#a0a0a0]">
      <div className="w-[17px] shrink-0 flex flex-col">
        <div className="h-[19px] text-center text-[13px] leading-[14px] text-[#222]">×</div>
        <div className="flex-1 bg-[linear-gradient(#e6eff7,#c4d8e9)] flex items-end justify-center pb-[4px]">
          <div className="origin-bottom scale-y-[.72]">
            <span className="block [writing-mode:vertical-rl] rotate-180 text-[14px] leading-none text-[#333] whitespace-nowrap">ツールボックス</span>
          </div>
        </div>
      </div>
      <div className="flex-1 flex flex-col min-w-0">
        <div className="flex h-[162px]">
          <div className="flex-1 min-w-0 bg-white overflow-hidden">
            <div className="h-[25px] grid grid-cols-[936px_374px_374px_189px] text-[14px] text-[#333] items-center">
              <span className="pl-[8px]">表題</span>
              <span className="pl-[7px]">差出人</span>
              <span className="pl-[7px]">宛先</span>
              <span className="text-right pr-[7px]">時間</span>
            </div>
            {rows.map((t, i) => (
              <div key={t} className={`h-[25px] grid grid-cols-[936px_374px_374px_189px] text-[14px] font-bold text-[#222] items-stretch border-b border-[#c9c9c9] ${i % 2 ? 'bg-[#e9e9e9]' : 'bg-white'}`}>
                <div className="flex items-center pl-[6px] gap-[6px] whitespace-nowrap text-[13.8px]"><Mail />{t}</div>
                <div className="flex items-center pl-[3px] border-l border-[#d0d0d0]">Trading Platform</div>
                <div className="border-l border-[#d0d0d0]" />
                <div className="flex items-center justify-end pr-[7px] border-l border-[#d0d0d0] font-normal [-webkit-text-stroke:.4px_#222]">13:59 | 本日</div>
              </div>
            ))}
          </div>
          <div className="w-[22px] shrink-0 bg-[#f0f0f0] flex flex-col items-center text-[#555] text-[11px]">
            <div className="h-[22px] leading-[22px]">^</div>
            <div className="w-full h-[124px] bg-[#cdcdcd]" />
            <div className="flex-1 flex items-center">v</div>
          </div>
        </div>
        <div className="h-[27px] flex items-start border-t-2 border-black text-[14px] text-[#8a8a8a]">
          {bottomTabs.map(b => b.on ? (
            <div key={b.t} className={`${b.w} h-[24px] -mt-[1px] bg-white border-x border-b border-black flex items-center justify-center text-[#222] relative`}>
              {b.t}<span className="ml-[6px] mt-[8px] text-[11px] leading-none text-[#d01f1f]">7</span>
            </div>
          ) : (
            <div key={b.t} className={`${b.w} h-[18px] mt-[3px] border-r border-[#999] flex items-center justify-center whitespace-nowrap`}>{b.t}</div>
          ))}
          <span className="ml-auto mr-[22px] mt-[3px] text-[#222] whitespace-nowrap">ストラテジーテスター</span>
        </div>
      </div>
    </div>
  )
}

// ---------- file menu overlay ----------
const menuItems = [
  { t: '新規チャート (N)', more: true },
  { t: 'チャートの再表示 (E)', more: true, off: true },
  { t: 'チャートのプロファイル (F)', more: true },
  { t: '閉じる (C)', k: 'Ctrl+F4' },
  { t: '保存... (S)', k: 'Ctrl+S', ic: mi.save },
  { t: '画像として保存 (I)...', ic: mi.saveImg },
  { sep: true },
  { t: 'データフォルダを開く(D)', k: 'Ctrl+Shift+D', ic: mi.folder },
  { sep: true },
  { t: '印刷... (P)', k: 'Ctrl+P', ic: mi.print },
  { t: '印刷プレビュー (v)', ic: mi.preview },
  { t: '印刷設定... (R)' },
  { sep: true },
  { t: 'デモ口座を開く... (A)', ic: mi.demo, hot: true },
  { t: '入金 (T)', ic: mi.deposit },
  { t: '出金 (H)', ic: mi.withdraw },
  { t: '取引口座にログイン (L)', ic: mi.login },
  { t: 'ウェブトレーダーにログイン (W)', ic: mi.web },
  { t: 'MQL5.community にログイン (M)', ic: mi.mql },
  { sep: true },
  { t: '閉じる(x)' },
]

function FileMenu() {
  return (
    <div className="absolute left-0 top-[31px] w-[362px] h-[528px] pt-[3px] bg-[#f0f0f0] border-r border-b border-[#a0a0a0] shadow-[2px_2px_3px_rgba(0,0,0,.35)] text-[14px] text-[#333]">
      {menuItems.map((m, i) => m.sep ? (
        <div key={i} className="h-[12px] flex items-center pr-[3px]"><div className="w-full h-px bg-[#b5b5b5]" /></div>
      ) : (
        <div key={m.t} className={`h-[28px] flex items-center relative pr-[7px] ${m.hot ? 'bg-[#0078d7] text-white' : ''} ${m.off ? 'text-[#8f8f8f]' : ''}`}>
          <div className="w-[37px] pl-[7px] shrink-0">{m.ic}</div>
          <span className="whitespace-nowrap">{m.t}</span>
          {m.k && <span className="ml-auto whitespace-nowrap">{m.k}</span>}
          {m.more && <div className="ml-auto mr-[3px] border-y-[5px] border-y-transparent border-l-[5px] border-l-black" />}
        </div>
      ))}
    </div>
  )
}

const Circled = ({ pos, n }) => (
  <div className={`absolute w-[36px] h-[36px] rounded-full border-2 border-[#e0242c] bg-transparent flex items-center justify-center text-[29px] font-bold text-[#e0242c] leading-none ${pos}`}>{n}</div>
)

function Marks() {
  return (
    <>
      <div className="absolute left-0 top-[5px] w-[90px] h-[30px] border-x-[8px] border-y-[7px] border-[#ed1c24] bg-[#0078d7] flex items-center justify-center text-[14px] text-white whitespace-nowrap">ファイル (F)</div>
      <svg className="absolute left-[88px] top-[18px] w-[90px] h-[36px]" viewBox="0 0 90 36"><path d="M2 2L84 33" stroke="#d8242c" strokeWidth="2" /></svg>
      <Circled pos="left-[172px] top-[41px]" n="1" />
      <Circled pos="left-[143px] top-[302px]" n="2" />
      <div className="absolute left-[6px] top-[340px] w-[178px] h-[46px] border-[8px] border-[#ed1c24] shadow-[inset_0_0_0_1px_#fff]" />
    </>
  )
}

export default function App() {
  return (
    <div className={`relative w-[1912px] h-[980px] overflow-hidden bg-[#f0f0f0] flex flex-col ${font}`}>
      <div className="h-[6px] shrink-0 bg-white" />
      <MenuBar />
      <Toolbar />
      <div className="flex h-[703px] shrink-0">
        <Navigator />
        <div className="flex-1 min-w-0 flex flex-col pl-[1px]">
          <div className="h-[678px] shrink-0 border-b-2 border-black bg-[#3c4650] grid grid-cols-[801px_801px] grid-rows-[337px_338px] gap-y-px">
            <EurWindow />
            <GbpWindow />
            <ChfWindow />
            <JpyWindow />
          </div>
          <TabStrip />
        </div>
      </div>
      <div className="h-[6px] shrink-0" />
      <Toolbox />
      <div className="flex-1 border-t border-[#b0b0b0] mt-[4px]" />
      <FileMenu />
      <Marks />
    </div>
  )
}
